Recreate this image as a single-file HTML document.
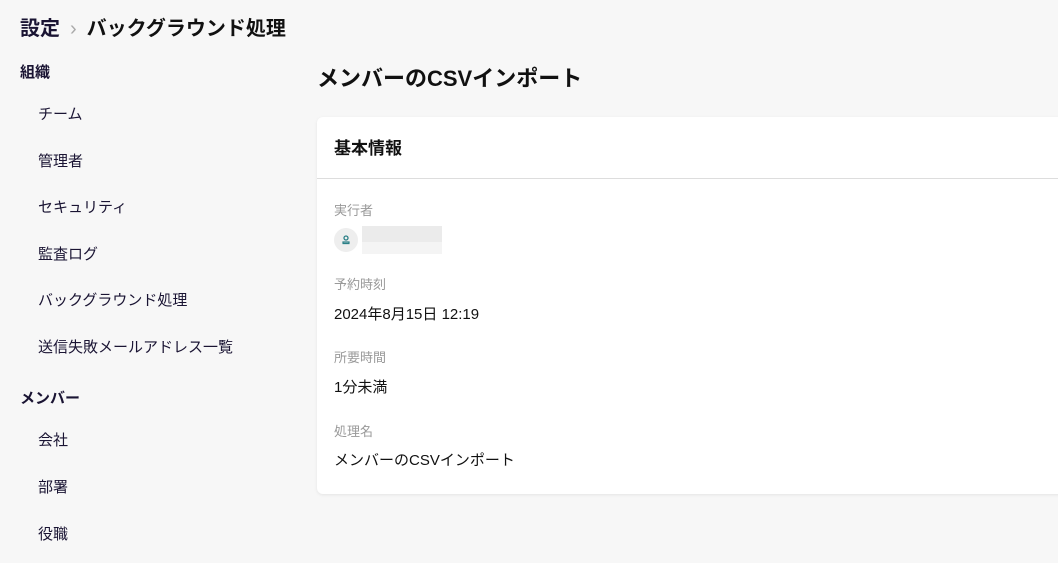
<!DOCTYPE html>
<html><head><meta charset="utf-8"><style>
body{margin:0;width:1058px;height:563px;background:#f7f7f7;font-family:"Liberation Sans","Noto Sans CJK JP",sans-serif;color:#111;position:relative;overflow:hidden}
.a{position:absolute;white-space:nowrap}
.bc{left:20px;top:12px;font-size:20px;font-weight:bold}
.sec{left:20px;font-size:15px;font-weight:bold;color:#1a1433}
.it{left:38px;font-size:15px;color:#1a1433}
.card{position:absolute;left:317px;top:117px;width:760px;height:377px;background:#fff;border-radius:6px;box-shadow:0 1px 3px rgba(0,0,0,.08)}
.lab{left:17px;font-size:13px;color:#999}
.val{left:17px;font-size:15px;color:#111}
</style></head><body>
<div class="a bc"><span style="color:#1a1433">設定</span><span style="color:#aaa;font-weight:normal;margin:0 10px">›</span>バックグラウンド処理</div>
<div class="a sec" style="top:61px">組織</div>
<div class="a it" style="top:103px">チーム</div>
<div class="a it" style="top:150px">管理者</div>
<div class="a it" style="top:196px">セキュリティ</div>
<div class="a it" style="top:243px">監査ログ</div>
<div class="a it" style="top:289px">バックグラウンド処理</div>
<div class="a it" style="top:336px">送信失敗メールアドレス一覧</div>
<div class="a sec" style="top:387px">メンバー</div>
<div class="a it" style="top:429px">会社</div>
<div class="a it" style="top:476px">部署</div>
<div class="a it" style="top:523px">役職</div>
<div class="a" style="left:317px;top:61px;font-size:22px;font-weight:bold">メンバーのCSVインポート</div>
<div class="card">
<div class="a" style="left:17px;top:17px;font-size:17px;font-weight:bold">基本情報</div>
<div class="a" style="left:0;top:61px;width:760px;border-top:1px solid #ddd"></div>
<div class="a lab" style="top:83px">実行者</div>
<div class="a" style="left:17px;top:111px;width:24px;height:24px;border-radius:50%;background:#eee"><svg width="24" height="24" viewBox="0 0 24 24"><circle cx="12" cy="10" r="2" fill="none" stroke="#2a7f86" stroke-width="1.3"/><path d="M8.5 15.5h7" stroke="#2a7f86" stroke-width="1.3"/><path d="M9 15.5v-1.5h6v1.5" fill="none" stroke="#2a7f86" stroke-width="1.2"/></svg></div>
<div class="a" style="left:45px;top:109px;width:80px;height:16px;background:#ebebeb"></div>
<div class="a" style="left:45px;top:125px;width:80px;height:12px;background:#f4f4f4"></div>
<div class="a lab" style="top:157px">予約時刻</div>
<div class="a val" style="top:186px">2024年8月15日 12:19</div>
<div class="a lab" style="top:230px">所要時間</div>
<div class="a val" style="top:259px">1分未満</div>
<div class="a lab" style="top:304px">処理名</div>
<div class="a val" style="top:332px">メンバーのCSVインポート</div>
</div>
</body></html>
